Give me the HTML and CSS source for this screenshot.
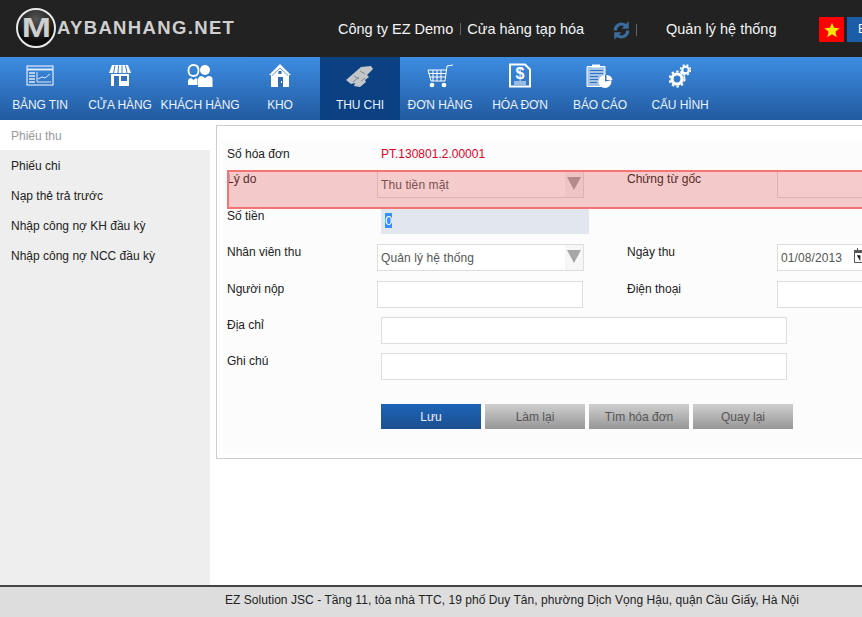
FILE: index.html
```html
<!DOCTYPE html>
<html lang="vi">
<head>
<meta charset="utf-8">
<title>Phiếu thu</title>
<link rel="stylesheet" href="styles.css">
</head>
<body>
<div class="page">
  <header class="topbar">
    <div class="logo">
      <span class="logo-badge"><span class="logo-m">M</span></span><span class="logo-text">AYBANHANG.NET</span>
    </div>
    <div class="company">
      <span>Công ty EZ Demo</span><i class="sep"></i><span>Cửa hàng tạp hóa</span>
    </div>
    <svg class="sync" width="17" height="19" viewBox="1.500 1.500 15 17"><path d="M2 10 A7 7 0 0 1 13 4.200 L15.500 1.800 V8.500 H9 L11.200 6.300 A4 4 0 0 0 5 10 Z M16 10 A7 7 0 0 1 5 15.800 L2.500 18.200 V11.500 H9 L6.800 13.700 A4 4 0 0 0 13 10 Z"/></svg>
    <i class="sep sep-sync"></i>
    <span class="user">Quản lý hệ thống</span>
    <div class="flag"><svg width="16" height="16" viewBox="0 0 24 24"><path fill="#ffe600" d="M12 1l3.200 7.600 8.200.7-6.200 5.400 1.900 8L12 18.400 4.900 22.700l1.900-8L.6 9.300l8.200-.7z"/></svg></div>
    <div class="lang">EN</div>
  </header>

  <nav class="mainnav">
    <a class="navitem"><svg class="ico" width="28" height="24" viewBox="0 0 28 24"><rect x="1" y="2" width="26" height="19" fill="none" stroke="#fff"/><path d="M1 5.500H27" stroke="#dfeaf8" stroke-width="2"/><path d="M3 9h6M3 12h6M3 15h6M3 18h6" stroke="#dfeaf8" stroke-width="1.500"/><path d="M11 8v10h14M12 15l4-2 3 1 5-4" fill="none" stroke="#dfeaf8"/></svg><span>BẢNG TIN</span></a>
    <a class="navitem"><svg class="ico" width="24" height="24" viewBox="0 0 24 24"><path fill="#fff" d="M4 1h16l3 8H1z"/><path stroke="#3a7fd0" d="M7 1.500 5.500 9M10.500 1.500 10 9M14 1.500V9M17.500 1.500 19 9"/><path fill="#fff" d="M3 10h18v12H3z"/><path fill="#3272bf" d="M6 12h5v10H6zM13 12h6v5h-6z"/></svg><span>CỬA HÀNG</span></a>
    <a class="navitem"><svg class="ico" width="26" height="24" viewBox="0 0 26 24"><circle cx="18" cy="6" r="5" fill="#fff"/><path fill="#fff" d="M11 23V15c0-2 2-3 4-3l3 2 3-2c3 0 4.500 1 4.500 3v8z"/><path fill="none" stroke="#fff" stroke-width="1.800" d="M6.500 1c3 0 5 2 5 5.500s-2 5.500-5 5.500-5-2-5-5.500 2-5.500 5-5.500z"/><path fill="#fff" d="M1 21v-4c0-2 2-3 3-3l2.500 2 2.500-2 1.500 1v6z"/></svg><span>KHÁCH HÀNG</span></a>
    <a class="navitem"><svg class="ico" width="22" height="24" viewBox="0 0 22 24"><path fill="#fff" d="M11 0 22 11h-2v12H2V11H0z"/><path fill="none" stroke="#3a7fd0" stroke-width=".8" d="M3 11.500 11 4l8 7.500"/><path fill="#2f6db8" d="M9 13h5v10H9z"/><rect x="9.500" y="7" width="3" height="3" fill="#2f6db8"/><rect x="12" y="17" width="1" height="2" fill="#fff"/></svg><span>KHO</span></a>
    <a class="navitem active"><svg class="ico" width="30" height="24" viewBox="0 0 30 24"><path fill="#c3c7c9" d="M1 16 16 3l10-1 2 3-6 6 2 2-4 3 1 2-6 5-6-1 1-3-4 1z"/><path fill="none" stroke="#7f8a94" d="M9 12l5 3M15 7l5 3M8 18l6-5M16 17l4-3"/></svg><span>THU CHI</span></a>
    <a class="navitem"><svg class="ico" width="28" height="24" viewBox="0 0 28 24"><path fill="none" stroke="#fff" d="M27 1 21 2 19 17H5L2 6h19M3 9.500h17M4 13h15M7 6v11M11 6v11M15 6v11"/><circle cx="6" cy="21" r="2.300" fill="#fff"/><circle cx="18" cy="21" r="2.300" fill="#fff"/></svg><span>ĐƠN HÀNG</span></a>
    <a class="navitem"><svg class="ico" width="22" height="25" viewBox="0 0 22 25"><path fill="none" stroke="#fff" stroke-width="2" d="M1 1h15l5 5v17H1z"/><text x="11" y="15.500" class="dollar">$</text><path stroke="#fff" d="M5 18.500h12M5 20.500h12"/></svg><span>HÓA ĐƠN</span></a>
    <a class="navitem"><svg class="ico" width="28" height="25" viewBox="0 0 28 25"><path fill="#fff" fill-opacity=".55" stroke="#fff" d="M1 3h18v20H1z"/><path fill="#fff" d="M6 1h8v3H6z"/><path stroke="#3272bf" d="M4 7h13M4 10h13M4 13h8M4 16h8M4 19h7"/><circle cx="19" cy="18" r="6.500" fill="#fff"/><path fill="#3272bf" d="M19 18V11.500l1 0 6 5z"/><path fill="#fff" d="M20.500 16.500V11.500a6.500 6.500 0 0 1 6 5z"/></svg><span>BÁO CÁO</span></a>
    <a class="navitem"><svg class="ico" width="22" height="24" viewBox="0 0 22 24"><circle cx="8" cy="15" r="5" fill="none" stroke="#fff" stroke-width="3.200"/><circle cx="8" cy="15" r="7.500" fill="none" stroke="#fff" stroke-width="2" stroke-dasharray="2.500 2.400"/><circle cx="16.500" cy="6" r="3.300" fill="none" stroke="#fff" stroke-width="2.200"/><circle cx="16.500" cy="6" r="5" fill="none" stroke="#fff" stroke-width="1.500" stroke-dasharray="2 2"/></svg><span>CẤU HÌNH</span></a>
  </nav>

  <main class="main">
    <aside class="sidebar">
      <a class="sideitem current">Phiếu thu</a>
      <a class="sideitem">Phiếu chi</a>
      <a class="sideitem">Nạp thẻ trả trước</a>
      <a class="sideitem">Nhập công nợ KH đầu kỳ</a>
      <a class="sideitem">Nhập công nợ NCC đầu kỳ</a>
    </aside>
    <section class="panel">
      <form class="form">
        <div class="highlight"></div>
        <label class="lbl first">Số hóa đơn</label>
        <div class="code">PT.130801.2.00001</div>

        <label class="lbl">Lý do</label>
        <div class="select">Thu tiền mặt<b class="arrow"></b></div>
        <label class="lbl">Chứng từ gốc</label>
        <div class="input"></div>

        <label class="lbl">Số tiền</label>
        <div class="amount"><span class="selected">0</span></div>

        <label class="lbl">Nhân viên thu</label>
        <div class="select">Quản lý hệ thống<b class="arrow"></b></div>
        <label class="lbl">Ngày thu</label>
        <div class="input date">01/08/2013<svg class="cal" width="14" height="15" viewBox="0 0 14 15"><path fill="none" stroke="#555" d="M.5 2.500h13v12H.5z"/><path fill="#555" d="M0 2h14v3H0zM3 0h1v3H3zM10 0h1v3h-1z"/><path stroke="#555" d="M3 7.500h3v5M9 7.500v5"/></svg></div>

        <label class="lbl">Người nộp</label>
        <div class="input"></div>
        <label class="lbl">Điện thoại</label>
        <div class="input"></div>

        <label class="lbl">Địa chỉ</label>
        <div class="input long"></div>

        <label class="lbl">Ghi chú</label>
        <div class="input long"></div>

        <div class="actions">
          <button type="button" class="btn primary">Lưu</button>
          <button type="button" class="btn">Làm lại</button>
          <button type="button" class="btn">Tìm hóa đơn</button>
          <button type="button" class="btn">Quay lại</button>
        </div>
      </form>
    </section>
  </main>

  <footer class="footer">EZ Solution JSC - Tầng 11, tòa nhà TTC, 19 phố Duy Tân, phường Dịch Vọng Hậu, quận Cầu Giấy, Hà Nội</footer>
</div>
</body>
</html>
```
FILE: styles.css
```css
* { box-sizing: border-box; }
html, body { margin: 0; height: 100%; overflow: hidden; }
body { font-family: "Liberation Sans", Arial, sans-serif; font-size: 12px; color: #222; background: #fff; }
.page { display: flex; flex-direction: column; width: 862px; height: 617px; overflow: hidden; }

.topbar { flex: none; height: 57px; background: #222; color: #f4f4f4; display: flex; align-items: flex-start; font-size: 14.5px; }
.logo { display: flex; align-items: center; width: 338px; height: 57px; padding-left: 16px; flex: none; }
.logo-badge { width: 40px; height: 40px; border-radius: 50%; border: 2px solid #e8e8e8; background: radial-gradient(circle at 50% 25%, #555, #0c0c0c 70%); display: flex; align-items: center; justify-content: center; flex: none; margin-top: -2px; }
.logo-m { display: block; font-size: 27px; font-weight: bold; line-height: 30px; color: #cfcfcf; transform: scaleX(1.3); }
.logo-text { font-size: 18.5px; font-weight: bold; letter-spacing: 1.35px; color: #cfcfcf; margin-top: -1px; margin-left: 1px; }
.company { display: flex; align-items: center; height: 16px; margin-top: 21px; width: 275px; flex: none; }
.sep { display: inline-block; width: 1px; height: 12px; background: #666; margin: 0 6px 0 7px; flex: none; }
.sync { margin-top: 21px; flex: none; fill: #3a6c9c; }
.sep-sync { margin: 24px 0 0 6px; }
.user { margin: 21px 0 0 29px; width: 153px; flex: none; line-height: 16px; }
.flag { flex: none; width: 25px; height: 25px; margin-top: 17px; background: #f00; display: flex; align-items: center; justify-content: center; }
.lang { flex: none; width: 40px; height: 25px; margin: 17px 0 0 3px; padding-left: 11px; background: #1c5da8; color: #fff; line-height: 25px; font-size: 12px; }

.mainnav { flex: none; height: 63px; display: flex; background: linear-gradient(#3d8de2, #225aa0); }
.navitem { width: 80px; flex: none; display: flex; flex-direction: column; align-items: center; color: #eaf2fb; font-size: 12px; letter-spacing: -.1px; white-space: nowrap; }
.navitem .ico { height: 26px; margin-top: 6px; flex: none; }
.navitem span { margin-top: 9px; line-height: 14px; }
.navitem.active { background: #0b4182; }
.dollar { font: bold 16px "Liberation Sans", Arial, sans-serif; fill: #fff; text-anchor: middle; }

.main { flex: 1; display: flex; min-height: 0; overflow: hidden; }
.sidebar { flex: none; width: 210px; background: #eee; }
.sideitem { display: block; height: 30px; line-height: 32px; padding-left: 11px; color: #222; }
.sideitem.current { background: #fff; color: #999; }

.panel { flex: none; width: 700px; height: 334px; margin: 5px 0 0 6px; border: 1px solid #ccc; border-right: 0; background: #fff; padding: 15px 0 0 5px; }
.form { position: relative; display: grid; grid-template-columns: 150px 250px 150px 200px; grid-template-rows: 30px 37px 36px 37px 36px 36px 51px; height: 313px; background: #fcfcfc; padding-left: 5px; align-items: start; }
.lbl { line-height: 14px; color: #222; margin-top: 1px; }
.lbl.first { margin-top: 6px; }
.code { color: #e0002a; grid-column: 2 / span 3; line-height: 14px; margin-top: 6px; padding-left: 4px; }

.select, .input { height: 27px; border: 1px solid #ddd; background: #fff; color: #555; padding: 0 3px; line-height: 26px; letter-spacing: .1px; }
.select { position: relative; width: 207px; }
.arrow { position: absolute; right: 0; top: 0; width: 18px; height: 25px; background: #f6f6f6; }
.arrow::after { content: ""; position: absolute; left: 2px; top: 5px; border: 7px solid transparent; border-top: 13px solid #a6a6a6; border-bottom: 0; }
.input { width: 206px; }
.input.date { position: relative; width: 200px; padding-left: 3px; }
.cal { position: absolute; left: 76px; top: 3px; }
.input.long { grid-column: 2 / span 3; width: 406px; margin-left: 4px; }
.amount { grid-column: 2 / span 3; width: 208px; height: 26px; margin-left: 4px; background: #e2e6ee; padding-left: 4px; line-height: 26px; font-size: 13px; color: #fff; }
.selected { background: #3390ff; }

.actions { grid-column: 2 / span 3; grid-row: 8; display: flex; gap: 4px; margin-left: 4px; }
.btn { width: 100px; height: 25px; padding: 0; border: 0; font: 12px "Liberation Sans", Arial, sans-serif; color: #555; background: linear-gradient(#cfcfcf, #979797); }
.btn.primary { color: #eef; background: linear-gradient(#1c64b8, #1d4f8f); }

.highlight { position: absolute; left: 0; right: -60px; top: 29px; height: 39px; background: rgba(220, 70, 70, .28); border: 2px solid #f47474; border-right: 0; pointer-events: none; z-index: 2; margin-left: 5px; }

.footer { flex: none; height: 32px; background: #ddd; border-top: 2px solid #444; padding-left: 225px; line-height: 26px; font-size: 12px; letter-spacing: .05px; color: #222; white-space: nowrap; }
```
